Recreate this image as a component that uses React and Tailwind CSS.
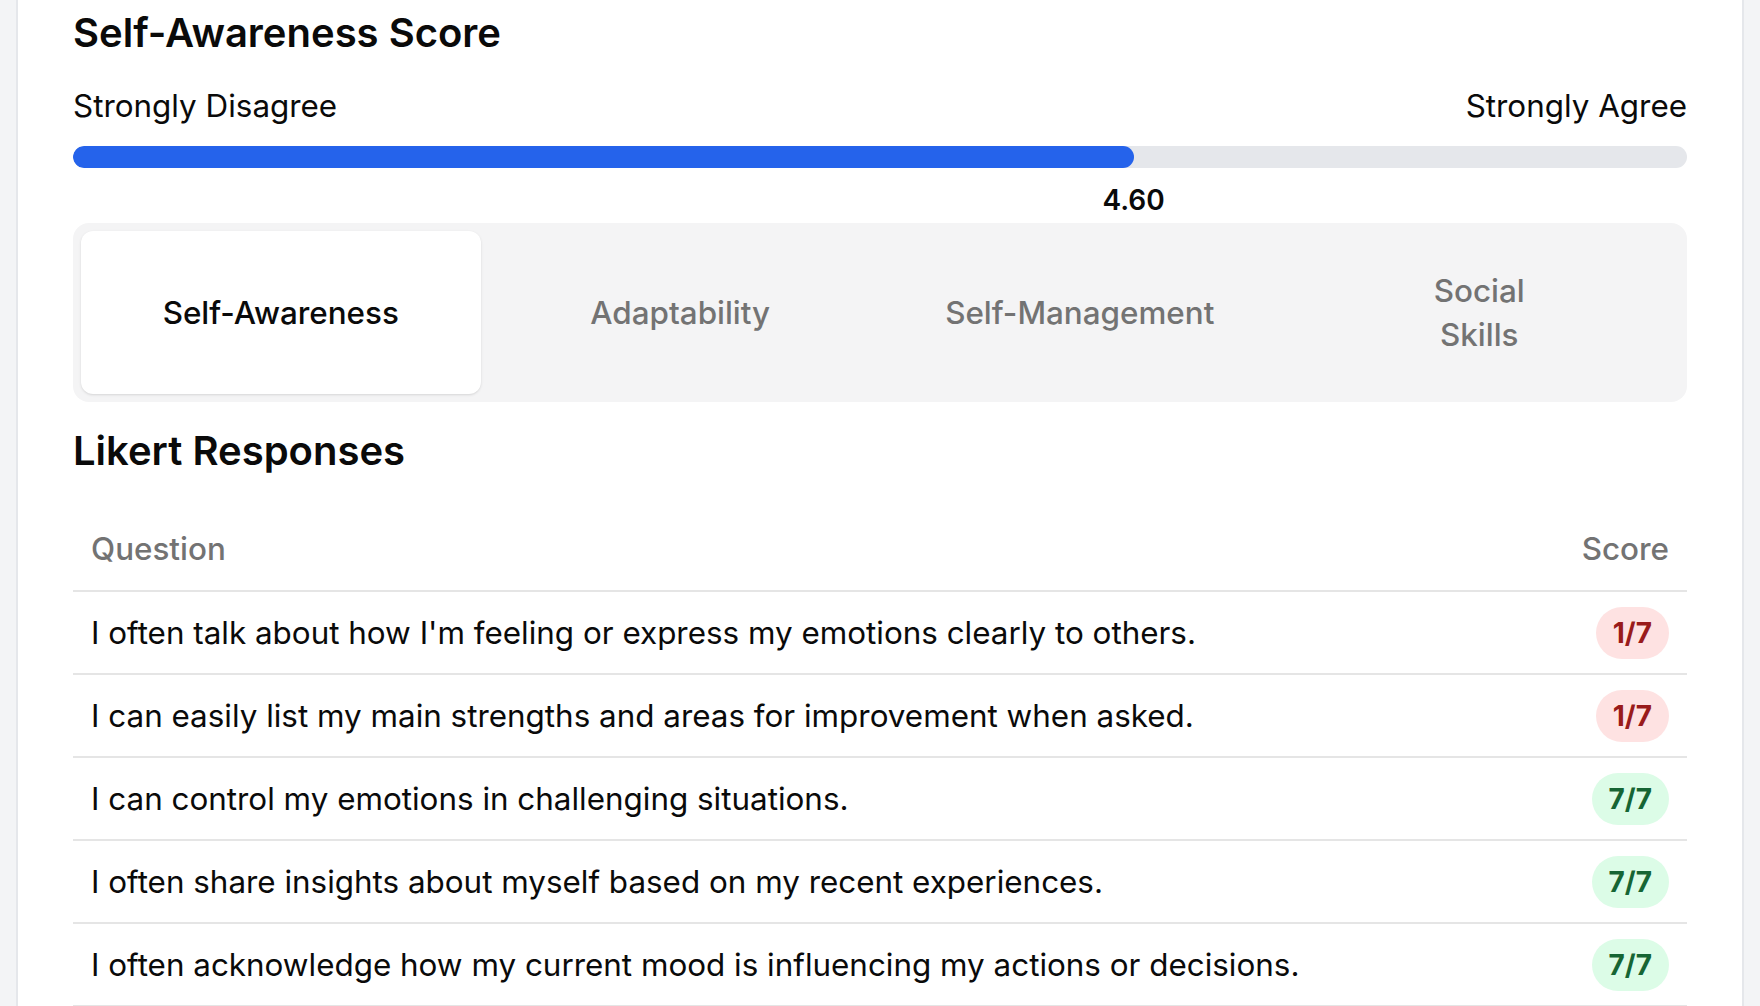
import { useState } from 'react';

const tabs = ['Self-Awareness', 'Adaptability', 'Self-Management', 'Social Skills'];

const responses = [
  { q: "I often talk about how I'm feeling or express my emotions clearly to others.", score: 1 },
  { q: 'I can easily list my main strengths and areas for improvement when asked.', score: 1 },
  { q: 'I can control my emotions in challenging situations.', score: 7 },
  { q: 'I often share insights about myself based on my recent experiences.', score: 7 },
  { q: 'I often acknowledge how my current mood is influencing my actions or decisions.', score: 7 },
];

function ScoreBadge({ score }) {
  const low = score <= 3;
  return (
    <span
      className={`inline-flex items-center rounded-full px-[17px] py-[6px] text-[28px] leading-[40px] font-bold ${
        low ? 'bg-[#fee2e2] text-[#991b1b]' : 'bg-[#dcfce7] text-[#166534]'
      }`}
    >
      {score}/7
    </span>
  );
}

export default function App() {
  const [activeTab, setActiveTab] = useState(0);
  const score = 4.6;
  const pct = (score / 7) * 100;

  return (
    <div
      className="min-h-screen bg-[#f3f4f6] px-4 text-[#0a0a0a]"
      style={{ fontFamily: 'Inter, "Noto Sans", sans-serif' }}
    >
      <div className="min-h-screen bg-white border-x-2 border-[#e5e7eb] px-[55px] pt-[5px] pb-10">
        {/* Score */}
        <h2 className="text-[40px] leading-[56px] font-semibold">Self-Awareness Score</h2>
        <div className="mt-[21px] flex justify-between text-[31.4px] leading-[48px]">
          <span>Strongly Disagree</span>
          <span>Strongly Agree</span>
        </div>
        <div className="mt-[16px] h-[22px] rounded-full bg-[#e5e7eb] overflow-hidden">
          <div className="h-full rounded-full bg-[#2563eb]" style={{ width: `${pct}%` }} />
        </div>
        <div className="relative mt-[12px] h-[40px]">
          <span
            className="absolute top-0 -translate-x-1/2 text-[28px] leading-[40px] font-semibold"
            style={{ left: `${pct}%` }}
          >
            {score.toFixed(2)}
          </span>
        </div>

        {/* Tabs */}
        <div className="mt-[3px] grid grid-cols-4 rounded-[16px] bg-[#f4f4f5] p-2">
          {tabs.map((t, i) => (
            <button
              key={t}
              onClick={() => setActiveTab(i)}
              className={`h-[163px] pt-[1px] flex items-center justify-center rounded-[12px] text-[31.4px] leading-[44px] font-medium ${
                activeTab === i ? 'bg-white text-[#0a0a0a] shadow-sm' : 'text-[#737373]'
              }`}
            >
              <span className={t === 'Social Skills' ? 'w-min' : ''}>{t}</span>
            </button>
          ))}
        </div>

        {/* Likert */}
        <h2 className="mt-[21px] text-[40px] leading-[56px] font-semibold">Likert Responses</h2>
        <table className="mt-[30px] w-full border-collapse">
          <thead>
            <tr className="border-b-2 border-[#e5e5e5]">
              <th className="h-[82px] px-[18px] text-left align-middle text-[31.4px] font-medium text-[#737373]">
                Question
              </th>
              <th className="h-[82px] px-[18px] text-right align-middle text-[31.4px] font-medium text-[#737373]">
                Score
              </th>
            </tr>
          </thead>
          <tbody>
            {responses.map((r, i) => (
              <tr key={i} className="border-b-2 border-[#e5e5e5]">
                <td className="h-[83px] px-[18px] align-middle text-[31.4px] leading-[48px]">{r.q}</td>
                <td className="h-[83px] px-[18px] text-right align-middle">
                  <ScoreBadge score={r.score} />
                </td>
              </tr>
            ))}
          </tbody>
        </table>
      </div>
    </div>
  );
}
